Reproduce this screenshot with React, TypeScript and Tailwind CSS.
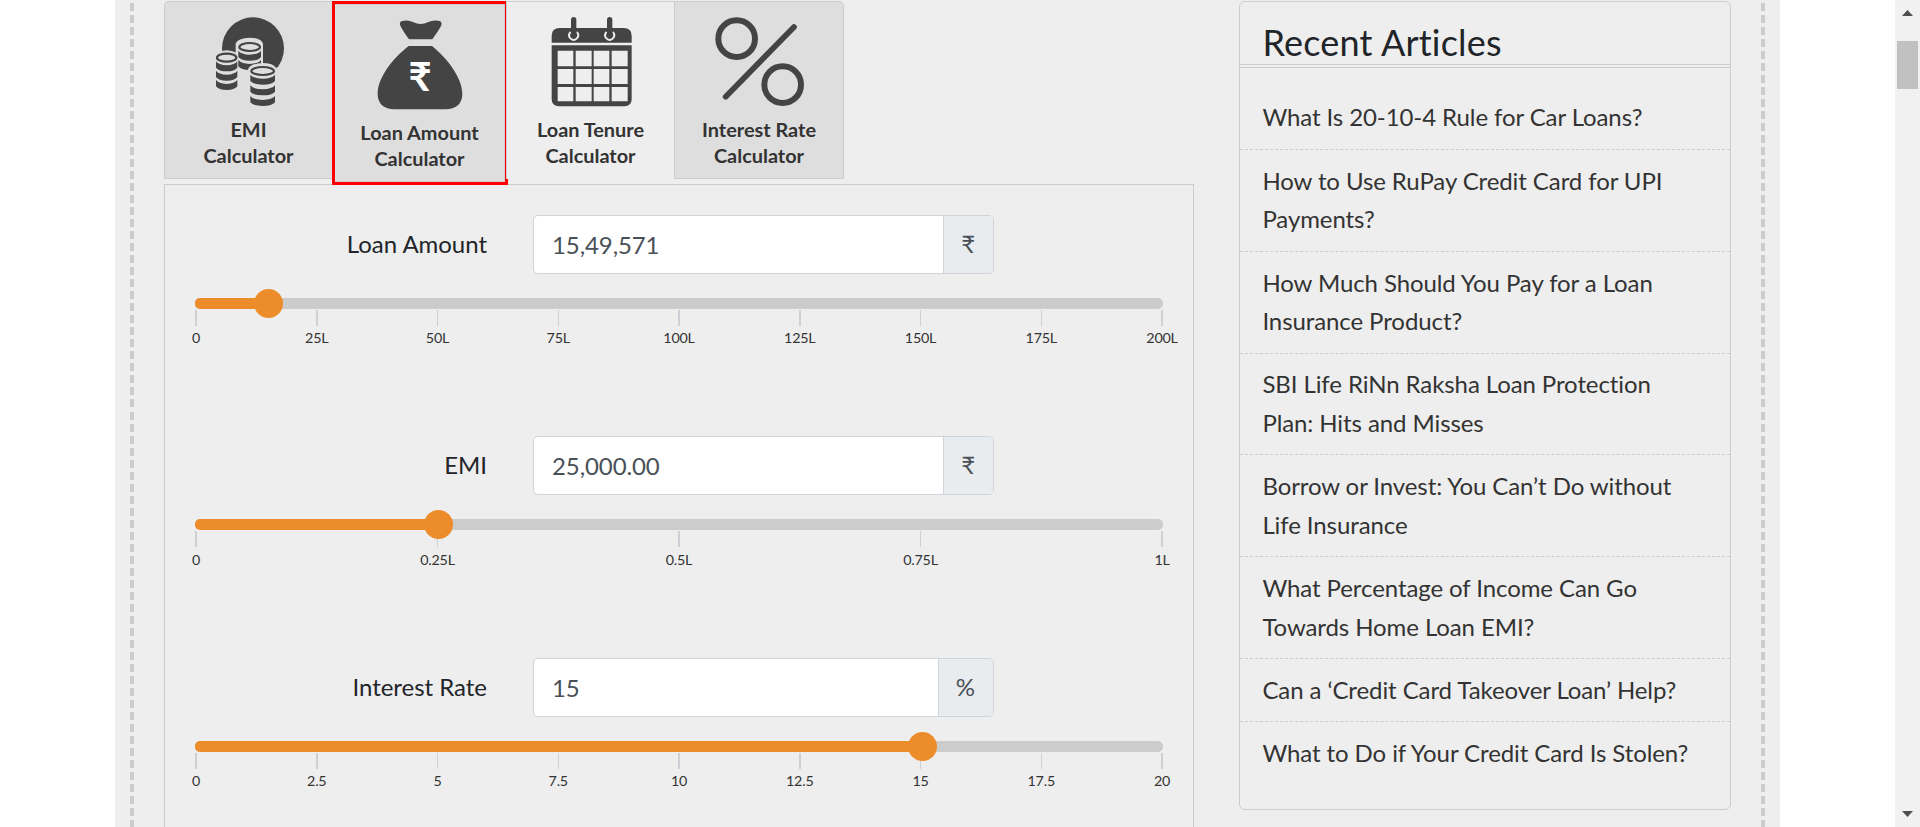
import React from "react";

const articles = [
  "What Is 20-10-4 Rule for Car Loans?",
  "How to Use RuPay Credit Card for UPI Payments?",
  "How Much Should You Pay for a Loan Insurance Product?",
  "SBI Life RiNn Raksha Loan Protection Plan: Hits and Misses",
  "Borrow or Invest: You Can’t Do without Life Insurance",
  "What Percentage of Income Can Go Towards Home Loan EMI?",
  "Can a ‘Credit Card Takeover Loan’ Help?",
  "What to Do if Your Credit Card Is Stolen?",
];

function Stack({ x, y, w, rows, gap }: { x: number; y: number; w: number; rows: number; gap: number }) {
  const rx = w / 2;
  const cx = x + rx;
  return (
    <g>
      <ellipse cx={cx} cy={y} rx={rx - 3} ry={12} fill="none" stroke="#444" strokeWidth={6.5} />
      {Array.from({ length: rows }, (_, i) => {
        const t = y + 14 + i * gap;
        return (
          <path
            key={i}
            fill="#444"
            d={`M${x} ${t - 3} Q${x + 8} ${t + 8} ${cx} ${t + 9} Q${x + w - 8} ${t + 8} ${x + w} ${t - 3} V${t + 16} Q${x + w - 8} ${t + 27} ${cx} ${t + 27} Q${x + 8} ${t + 27} ${x} ${t + 16} Z`}
          />
        );
      })}
    </g>
  );
}

function CoinsIcon() {
  return (
    <svg className="size-[90px]" viewBox="282 50 270 270">
      <circle cx="429" cy="144" r="93" fill="#444" />
      <path d="M377 130 Q382 113 420 112 Q454 113 459 130 V190 Q485 186 497 202 L530 202 V330 H377 Z" fill="#dedede" />
      <path d="M310 172 Q316 152 350 150 Q384 152 391 172 V275 H310 Z" fill="#dedede" />
      <Stack x={385} y={140} w={68} rows={2} gap={28} />
      <path d="M412 212 Q416 190 458 188 Q496 190 502 212 V325 H412 Z" fill="#dedede" />
      <Stack x={318} y={172} w={64} rows={3} gap={28} />
      <Stack x={421} y={212} w={74} rows={3} gap={32} />
    </svg>
  );
}

function BagIcon() {
  return (
    <svg className="size-[90px]" viewBox="796 58 270 270">
      <path
        fill="#444"
        d="M871 72 Q868 60 884 60 Q898 58 910 64 Q933 76 956 64 Q968 58 984 60 Q999 60 995 74 Q991 84 968 116 H898 Q875 84 871 72 Z M897 136 H967 C1010 170 1058 230 1058 280 C1058 310 1038 326 1008 326 H854 C824 326 804 310 804 280 C804 230 852 170 897 136 Z"
      />
      <text x="931" y="272" textAnchor="middle" fontFamily="Lato, sans-serif" fontWeight="700" fontSize="120" fill="#fff">
        ₹
      </text>
    </svg>
  );
}

function CalendarIcon() {
  return (
    <svg className="size-[90px]" viewBox="139 50 270 270">
      <path fill="#444" d="M156 127 V106 Q156 83 180 83 H372 Q396 83 396 106 V127 Z" />
      <path
        fill="#444"
        fillRule="evenodd"
        d="M156 135 H396 V296 Q396 318 374 318 H178 Q156 318 156 296 Z M174 151 V198 H221 V151 Z M228 151 V198 H276 V151 Z M282 151 V198 H329 V151 Z M336 151 V198 H384 V151 Z M174 206 V251 H221 V206 Z M228 206 V251 H276 V206 Z M282 206 V251 H329 V206 Z M336 206 V251 H384 V206 Z M174 260 V303 H221 V260 Z M228 260 V303 H276 V260 Z M282 260 V303 H329 V260 Z M336 260 V303 H384 V260 Z"
      />
      {[222, 330].map((x) => (
        <g key={x} strokeLinecap="round" fill="none">
          <path d={`M${x - 11} 97 A13.5 13.5 0 1 0 ${x + 11} 97`} stroke="#eee" strokeWidth="6" />
          <path d={`M${x} 58 V104`} stroke="#444" strokeWidth="16" />
        </g>
      ))}
    </svg>
  );
}

function PercentIcon() {
  return (
    <svg className="size-[90px]" viewBox="642 50 270 270" fill="none" stroke="#444" strokeLinecap="round">
      <circle cx="710" cy="115" r="55" strokeWidth="18" />
      <circle cx="848" cy="253" r="55" strokeWidth="18" />
      <path d="M677 289 L882 80" strokeWidth="17" />
    </svg>
  );
}

function TabContent({ icon, title }: { icon: React.ReactNode; title: string }) {
  return (
    <div className="flex flex-col items-center pt-[15px]">
      {icon}
      <div className="mt-[9px] text-center text-[19.9px]/[26px] font-bold text-[#333]">
        {title}
        <br />
        Calculator
      </div>
    </div>
  );
}

interface FieldProps {
  label: string;
  value: string;
  unit: string;
  percent: number;
  ticks: string[];
}

function Field({ label, value, unit, percent, ticks }: FieldProps) {
  return (
    <div className="h-[221.5px]">
      <div className="flex h-[59px] items-center">
        <div className="w-[323px] pr-px pb-px text-right text-[24px]/[36px] tracking-[-0.03px] text-[#212529]">{label}</div>
        <div className="ml-[45px] flex h-[59px] w-[461px] overflow-hidden rounded-[5px] border border-[#ced4da] bg-white text-[24px] text-[#495057]">
          <div className="flex flex-1 items-center pt-px pl-[18px] tracking-[-0.1px]">{value}</div>
          <div className="flex items-center border-l border-[#ced4da] bg-[#e9ecef] pr-[18px] pb-px pl-[17px]">{unit}</div>
        </div>
      </div>
      <div className="mt-6 ml-[30px] w-[968px]">
        <div className="relative h-[11px] rounded-[5px] bg-[#ccc]">
          <div className="h-full rounded-l-[5px] bg-[#ed8c2b]" style={{ width: `${percent}%` }} />
          <div className="absolute -top-[9px] -ml-[14.5px] size-[29px] rounded-full bg-[#ed8c2b]" style={{ left: `${percent}%` }} />
        </div>
        <div className="mx-px mt-px flex justify-between">
          {ticks.map((t) => (
            <div key={t} className="flex w-0 flex-col items-center">
              <div className="h-4 w-[1.5px] shrink-0 bg-[#cdd0d5]" />
              <div className="mt-[3.4px] text-[14.3px]/[18px] tracking-[-0.2px] text-[#333]">{t}</div>
            </div>
          ))}
        </div>
      </div>
    </div>
  );
}

function DashedRail() {
  return (
    <div className="mt-[3px] w-1 shrink-0 bg-[repeating-linear-gradient(to_bottom,#ccc_0,#ccc_8px,#eee_8px,#eee_12.015px)]" />
  );
}

export default function App() {
  return (
    <div className="flex h-[827px] w-[1920px] overflow-hidden bg-white font-['Lato',sans-serif] [font-variant-ligatures:none]">
      <div className="ml-[115px] flex w-[1665px] shrink-0 bg-[#eee] px-[15px]">
        <DashedRail />
        <main className="ml-[30px] w-[1030px] shrink-0 pt-px">
          <div className="flex h-[183px] items-start">
            <div className="h-[178px] w-[168px] rounded-tl-[5px] border border-r-0 border-[#ccc] bg-[#dedede]">
              <TabContent icon={<CoinsIcon />} title="EMI" />
            </div>
            <div className="relative -mr-0.5 h-[184px] w-[176px] border-3 border-[red] bg-[#dedede]">
              <div className="h-full w-[170px] border border-l-0 border-[#ccc]">
                <TabContent icon={<BagIcon />} title="Loan Amount" />
              </div>
            </div>
            <div className="relative h-[178px] w-[168px] border-t border-l border-[#ccc] bg-[#eee]">
              <TabContent icon={<CalendarIcon />} title="Loan Tenure" />
            </div>
            <div className="h-[178px] w-[170px] rounded-tr-[5px] border border-[#ccc] bg-[#dedede]">
              <TabContent icon={<PercentIcon />} title="Interest Rate" />
            </div>
          </div>
          <div className="h-[700px] border border-[#ccc] pt-[29.8px]">
            <Field label="Loan Amount" value="15,49,571" unit="₹" percent={7.6} ticks={["0", "25L", "50L", "75L", "100L", "125L", "150L", "175L", "200L"]} />
            <Field label="EMI" value="25,000.00" unit="₹" percent={25.15} ticks={["0", "0.25L", "0.5L", "0.75L", "1L"]} />
            <Field label="Interest Rate" value="15" unit="%" percent={75.2} ticks={["0", "2.5", "5", "7.5", "10", "12.5", "15", "17.5", "20"]} />
          </div>
        </main>
        <aside className="mt-px ml-[45px] h-[809px] w-[492px] shrink-0 rounded-[6px] border border-[#ccc]">
          <h2 className="h-[66px] border-b-4 border-double border-[#ccc] pt-[19px] pl-[22.5px] text-[36px]/[43px] tracking-[0.2px] text-[#212529]">
            Recent Articles
          </h2>
          <ul className="pt-[18.4px]">
            {articles.map((a) => (
              <li key={a} className="border-b border-dashed border-[#ccc] pt-[11.9px] pr-6 pb-[12.15px] pl-[22.4px] text-[24px]/[38.4px] tracking-[-0.09px] text-[#333] last:border-b-0">
                {a}
              </li>
            ))}
          </ul>
        </aside>
        <div className="ml-[30px] flex">
          <DashedRail />
        </div>
      </div>
      <div className="ml-auto flex w-[25px] shrink-0 flex-col items-center bg-[#f1f1f1] pt-[10px] pb-[10px]">
        <svg className="h-1.5 w-[11px]" viewBox="0 0 11 6"><path d="M5.5 0L11 6H0Z" fill="#505050" /></svg>
        <div className="mt-[25px] h-12 w-[21px] bg-[#c1c1c1]" />
        <svg className="mt-auto h-1.5 w-[11px]" viewBox="0 0 11 6"><path d="M0 0H11L5.5 6Z" fill="#505050" /></svg>
      </div>
    </div>
  );
}
